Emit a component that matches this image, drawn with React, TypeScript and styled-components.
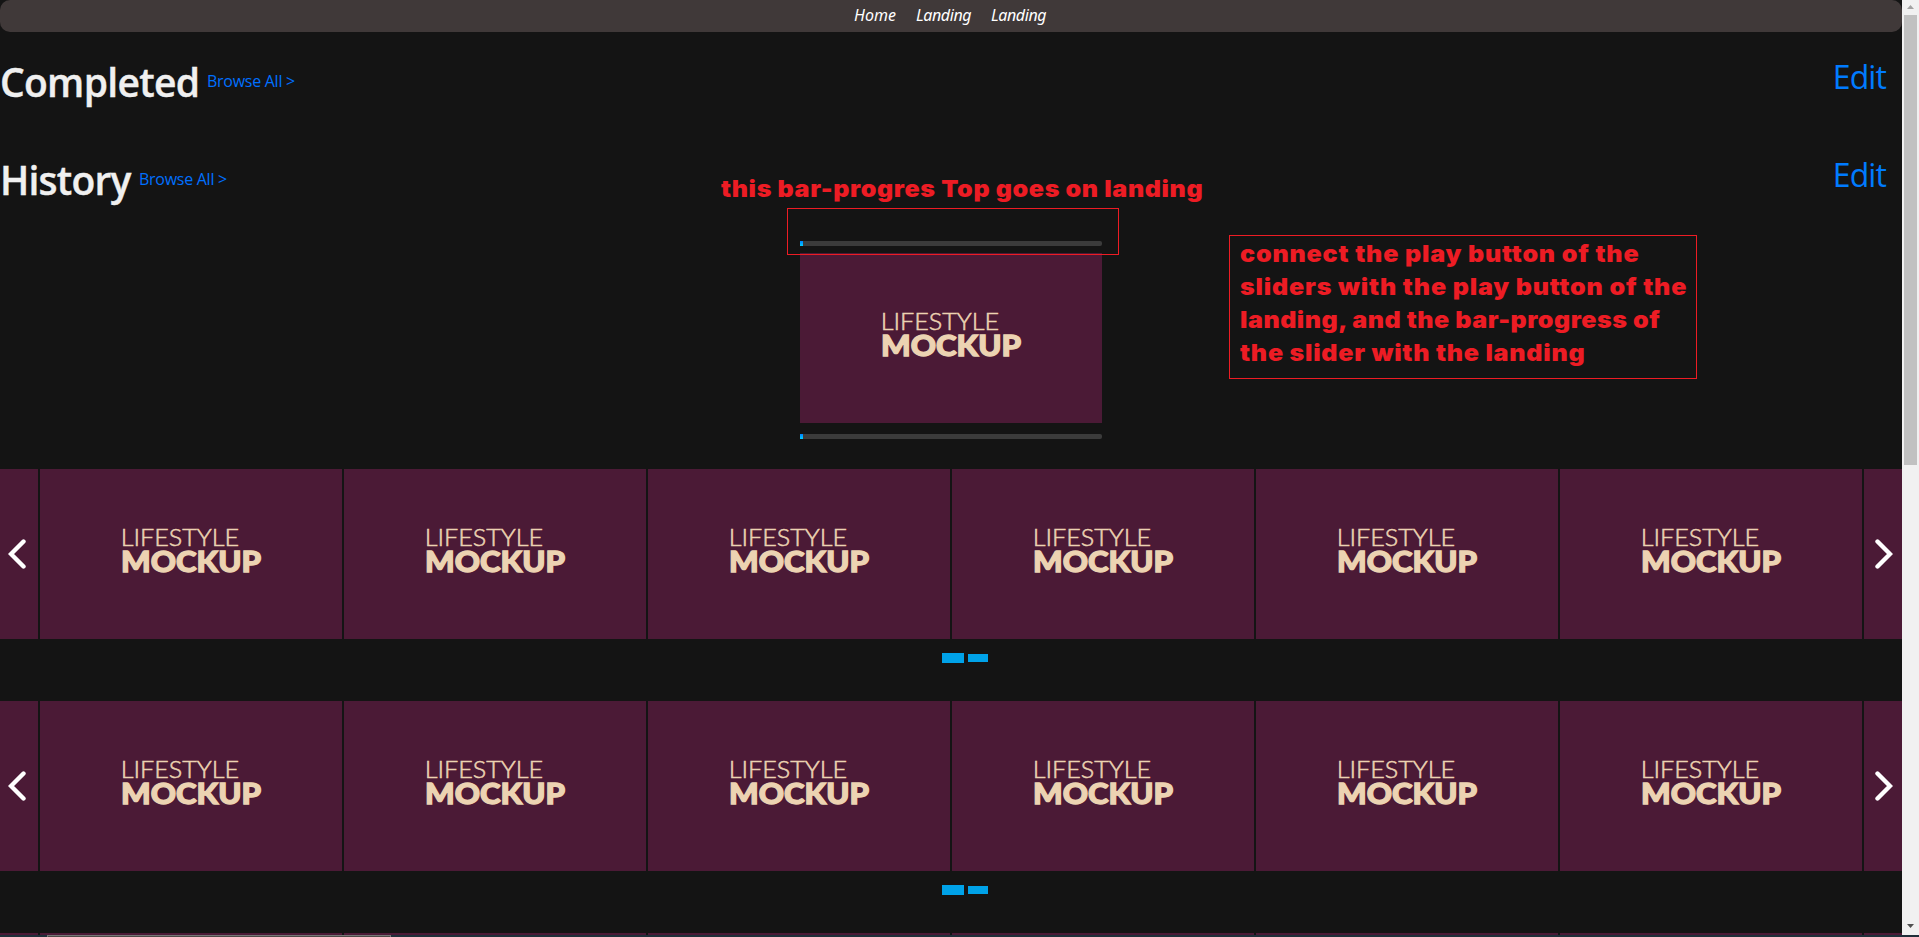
import React from "react";
import styled, { createGlobalStyle } from "styled-components";

const Global = createGlobalStyle`
  html, body, #root { margin: 0; height: 100%; overflow: hidden; background: #141414; }
  * { box-sizing: border-box; }
  a { text-decoration: none; color: inherit; }
`;
const Screen = styled.div`
  height: 937px;
  width: 1919px;
  display: flex;
  flex-direction: column;
  font-family: "Open Sans", "Noto Sans", sans-serif;
`;
const Viewport = styled.div`
  height: 935px;
  display: flex;
  overflow: hidden;
`;
const Page = styled.main`
  position: relative;
  width: 1902px;
  overflow: hidden;
  background: #141414;
`;
const Nav = styled.nav`
  height: 32px;
  padding-left: 854px;
  display: flex;
  border-radius: 10px;
  background: #403939;
  color: #fff;
`;
const NavLink = styled.a<{ $w: number; $spacing?: number }>`
  width: ${(p) => p.$w}px;
  font: italic 16px/31px "Noto Sans", sans-serif;
  letter-spacing: ${(p) => p.$spacing ?? 0}px;
  white-space: nowrap;
`;
const SectionHead = styled.header<{ $gap: number }>`
  height: 58px;
  margin-top: ${(p) => p.$gap}px;
  padding-right: 16px;
  display: flex;
`;
const Title = styled.h1<{ $w: number; $spacing: number }>`
  margin: 0;
  width: ${(p) => p.$w}px;
  color: #f0f0f0;
  font: 600 39px/54px "Open Sans", sans-serif;
  letter-spacing: ${(p) => p.$spacing}px;
  -webkit-text-stroke: 0.4px #f0f0f0;
  white-space: nowrap;
`;
const Browse = styled.a`
  color: #0070ff;
  font: 16px/52px "Open Sans", sans-serif;
  letter-spacing: -0.27px;
  white-space: nowrap;
`;
const Edit = styled.a`
  margin-left: auto;
  color: #007bff;
  font: 32px/44px "Open Sans", sans-serif;
  letter-spacing: -0.9px;
`;
const Feature = styled.section`
  width: 302px;
  margin: 30px 0 0 800px;
`;
const Bar = styled.div`
  height: 5px;
  border-radius: 0 2px 2px 0;
  background: #3b3b3b;
`;
const BarFill = styled.div`
  width: 3px;
  height: 5px;
  background: linear-gradient(#0080ff, #00d0ff);
`;
const CardBox = styled.div`
  flex: none;
  width: 302px;
  height: 170px;
  background: #4b1a36;
`;
const FeatureCard = styled.div`
  margin: 7px 0 11px;
`;
const Slider = styled.section<{ $gap: number }>`
  margin-top: ${(p) => p.$gap}px;
`;
const Track = styled.div`
  display: flex;
  gap: 2px;
`;
const Side = styled.div<{ $right?: boolean }>`
  width: 38px;
  height: 170px;
  padding-left: ${(p) => (p.$right ? 11 : 8)}px;
  display: flex;
  align-items: center;
  background: #4b1a36;
`;
const Dots = styled.div`
  height: 10px;
  margin: 14px 0 0 942px;
  display: flex;
  align-items: center;
  gap: 4px;
`;
const Dot = styled.i<{ $active?: boolean }>`
  width: ${(p) => (p.$active ? 22 : 20)}px;
  height: ${(p) => (p.$active ? 10 : 8)}px;
  background: #00a2e8;
`;
const Outline = styled.div`
  position: absolute;
  left: 787px;
  top: 208px;
  width: 332px;
  height: 47px;
  border: 1px solid #ed1c24;
`;
const Caption = styled.div`
  position: absolute;
  left: 721px;
  top: 173px;
`;
const Note = styled.div`
  position: absolute;
  left: 1229px;
  top: 235px;
  width: 468px;
  height: 144px;
  padding: 2px 0 0 10px;
  border: 1px solid #ed1c24;
`;
const RedLine = styled.p<{ $spacing: number }>`
  margin: 0;
  width: max-content;
  color: #ed1c24;
  font: 900 23px/33px Inter, "Liberation Sans", sans-serif;
  letter-spacing: ${(p) => p.$spacing}px;
  white-space: nowrap;
  transform: scaleX(1.09);
  transform-origin: left center;
`;
const Scrollbar = styled.aside`
  width: 17px;
  display: flex;
  flex-direction: column;
  align-items: center;
  background: #f1f1f1;
`;
const Arrow = styled.svg`
  width: 17px;
  height: 15px;
  flex: none;
`;
const Thumb = styled.div`
  width: 13px;
  height: 450px;
  margin-bottom: auto;
  background: #c1c1c1;
`;
const BottomEdge = styled.div`
  height: 2px;
  display: flex;
  background: #1f2f3a;
`;
const EdgeWindow = styled.div`
  margin-left: 47px;
  width: 344px;
  background: #4c4a48;
  border: 1px solid #777;
  border-bottom: 0;
`;

const Logo = () => (
  <svg width="302" height="170" fill="#ecd3b2" stroke="#ecd3b2" fontFamily="Lato">
    <text x="80.700" y="76.700" fontWeight="300" fontSize="23" strokeWidth="0.5" textLength="118.500" lengthAdjust="spacingAndGlyphs">LIFESTYLE</text>
    <text x="81" y="103" fontWeight="900" fontSize="29" strokeWidth="1.3" textLength="140" lengthAdjust="spacingAndGlyphs">MOCKUP</text>
  </svg>
);

const Card = ({ logo = true }: { logo?: boolean }) => <CardBox>{logo && <Logo />}</CardBox>;

const Chevron = ({ d }: { d: string }) => (
  <svg width="18" height="30" fill="none" stroke="#fff" strokeWidth="4.4" strokeLinecap="round">
    <path d={d} />
  </svg>
);

const Progress = () => (
  <Bar>
    <BarFill />
  </Bar>
);

const Row = ({ gap, peek }: { gap: number; peek?: boolean }) => (
  <Slider $gap={gap}>
    <Track>
      <Side>{!peek && <Chevron d="M15.500 2.500 3 15 15.500 27.500" />}</Side>
      {Array.from({ length: 6 }, (_, i) => (
        <Card key={i} logo={!peek} />
      ))}
      <Side $right>{!peek && <Chevron d="M2.500 2.500 15 15 2.500 27.500" />}</Side>
    </Track>
    {!peek && (
      <Dots>
        <Dot $active />
        <Dot />
      </Dots>
    )}
  </Slider>
);

const Heading = ({ title, width, gap, spacing }: { title: string; width: number; gap: number; spacing: number }) => (
  <SectionHead $gap={gap}>
    <Title $w={width} $spacing={spacing}>{title}</Title>
    <Browse>Browse All &gt;</Browse>
    <Edit>Edit</Edit>
  </SectionHead>
);

export default function App() {
  return (
    <Screen>
      <Global />
      <Viewport>
        <Page>
          <Nav>
            <NavLink $w={62}>Home</NavLink>
            <NavLink $w={75} $spacing={-0.4}>Landing</NavLink>
            <NavLink $w={75} $spacing={-0.4}>Landing</NavLink>
          </Nav>
          <Heading title="Completed" width={207} gap={23} spacing={-0.7} />
          <Heading title="History" width={139} gap={40} spacing={-0.8} />
          <Feature>
            <Progress />
            <FeatureCard>
              <Card />
            </FeatureCard>
            <Progress />
          </Feature>
          <Row gap={30} />
          <Row gap={38} />
          <Row gap={38} peek />
          <Outline />
          <Caption>
            <RedLine $spacing={0.55}>this bar-progres Top goes on landing</RedLine>
          </Caption>
          <Note>
            <RedLine $spacing={0.74}>connect the play button of the</RedLine>
            <RedLine $spacing={0.74}>sliders with the play button of the</RedLine>
            <RedLine $spacing={0.46}>landing, and the bar-progress of</RedLine>
            <RedLine $spacing={0.67}>the slider with the landing</RedLine>
          </Note>
        </Page>
        <Scrollbar>
          <Arrow>
            <path d="M5 9h7L8.500 5z" fill="#a3a3a3" />
          </Arrow>
          <Thumb />
          <Arrow>
            <path d="M5 4h7L8.500 8z" fill="#505050" />
          </Arrow>
        </Scrollbar>
      </Viewport>
      <BottomEdge>
        <EdgeWindow />
      </BottomEdge>
    </Screen>
  );
}
